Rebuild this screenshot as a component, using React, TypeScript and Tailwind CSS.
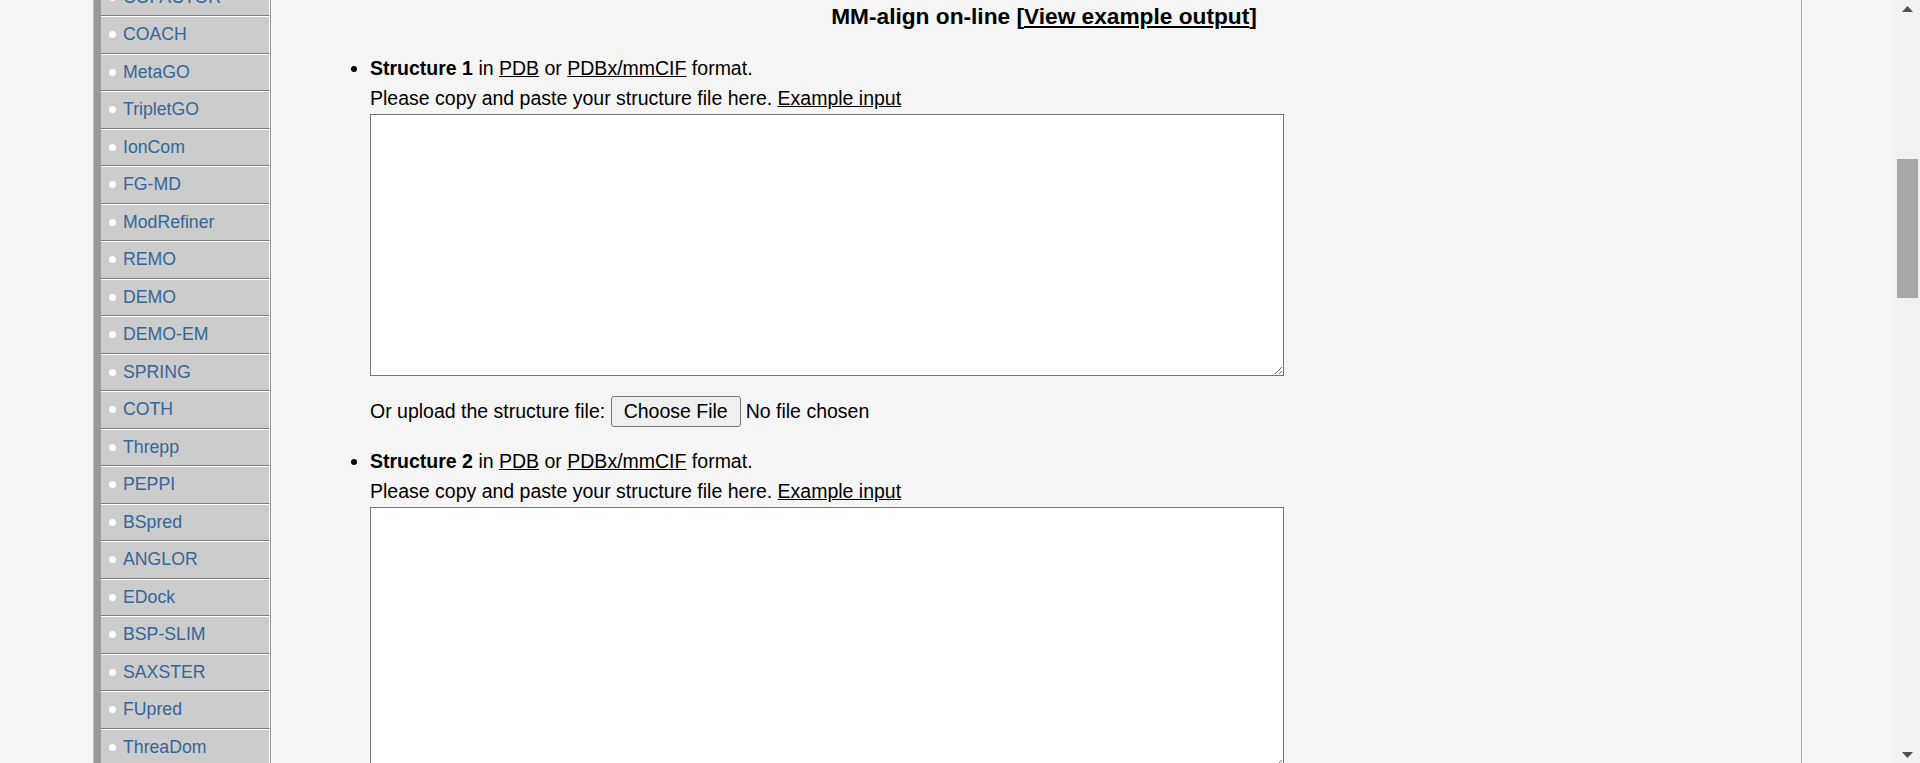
const tools = [
  "COFACTOR",
  "COACH",
  "MetaGO",
  "TripletGO",
  "IonCom",
  "FG-MD",
  "ModRefiner",
  "REMO",
  "DEMO",
  "DEMO-EM",
  "SPRING",
  "COTH",
  "Threpp",
  "PEPPI",
  "BSpred",
  "ANGLOR",
  "EDock",
  "BSP-SLIM",
  "SAXSTER",
  "FUpred",
  "ThreaDom",
];

export default function App() {
  return (
    <div className="flex h-[763px] w-full overflow-hidden bg-[#f5f5f5] font-['Liberation_Sans',Arial,sans-serif] text-black">
      <div className="min-w-0 flex-1 overflow-hidden">
        <div className="mx-auto flex h-full w-[1709px] border-x border-l-[#c0c0c0] border-r-[#aaaaaa]">
          <Sidebar />
          <Main />
        </div>
      </div>
      <Scrollbar />
    </div>
  );
}

function Sidebar() {
  return (
    <div className="flex w-[177px] shrink-0 border-r border-r-[#999999]">
      <div className="w-[7px] shrink-0 bg-[#999999]" />
      <div className="-mt-[21.5px] flex w-[169px] flex-col">
        {tools.map((name) => (
          <a
            key={name}
            className="flex h-[37.5px] shrink-0 items-center gap-[7px] border-t border-r border-b border-t-white border-r-white border-b-[#808080] bg-[#cccccc] pl-2 text-[17.7px] text-[#336699]"
          >
            <span className="h-[7px] w-[7px] shrink-0 rounded-full bg-white" />
            <span>{name}</span>
          </a>
        ))}
        {/* rest of the menu continues below the fold */}
        <div className="h-[40px] shrink-0 bg-[#cccccc]" />
      </div>
    </div>
  );
}

function StructureInput({ n, first }: { n: number; first?: boolean }) {
  return (
    <li className={first ? "" : "mt-[23px]"}>
      <div>
        <b>Structure {n}</b> in <a className="underline">PDB</a> or{" "}
        <a className="underline">PDBx/mmCIF</a> format.
      </div>
      <div className="mt-[8px]">
        Please copy and paste your structure file here.{" "}
        <a className="underline">Example input</a>
      </div>
      <textarea className="mt-[4px] block h-[262px] w-[914px] resize border border-[#767676] bg-white" />
      {first && (
        <div className="mt-[20px] flex items-center">
          <span className="whitespace-pre">Or upload the structure file: </span>
          <input
            type="file"
            className="text-[19.5px] file:mr-[5px] file:rounded-[3px] file:border file:border-[#767676] file:bg-[#efefef] file:px-3 file:py-[3px] file:leading-[23px] file:text-black"
          />
        </div>
      )}
    </li>
  );
}

function Main() {
  return (
    <div className="min-w-0 flex-1 pt-[3px]">
      <h1 className="pl-4 text-center text-[22.7px] leading-[26px] font-bold">
        MM-align on-line [<a className="underline">View example output</a>]
      </h1>
      <ul className="mt-[28px] list-disc pl-[99px] text-[19.5px] leading-[22.4px]">
        <StructureInput n={1} first />
        <StructureInput n={2} />
      </ul>
    </div>
  );
}

function Scrollbar() {
  return (
    <div className="flex w-[25px] shrink-0 flex-col bg-[#f1f1f1]">
      <div className="flex h-[17px] shrink-0 items-center justify-center">
        <svg width="11" height="6" viewBox="0 0 11 6">
          <polygon points="5.5,0 11,6 0,6" fill="#505050" />
        </svg>
      </div>
      <div className="flex flex-1 flex-col pt-[142px]">
        <div className="mx-[2px] h-[139px] bg-[#a8a8a8]" />
      </div>
      <div className="flex h-[17px] shrink-0 items-center justify-center">
        <svg width="11" height="6" viewBox="0 0 11 6">
          <polygon points="0,0 11,0 5.5,6" fill="#505050" />
        </svg>
      </div>
    </div>
  );
}
